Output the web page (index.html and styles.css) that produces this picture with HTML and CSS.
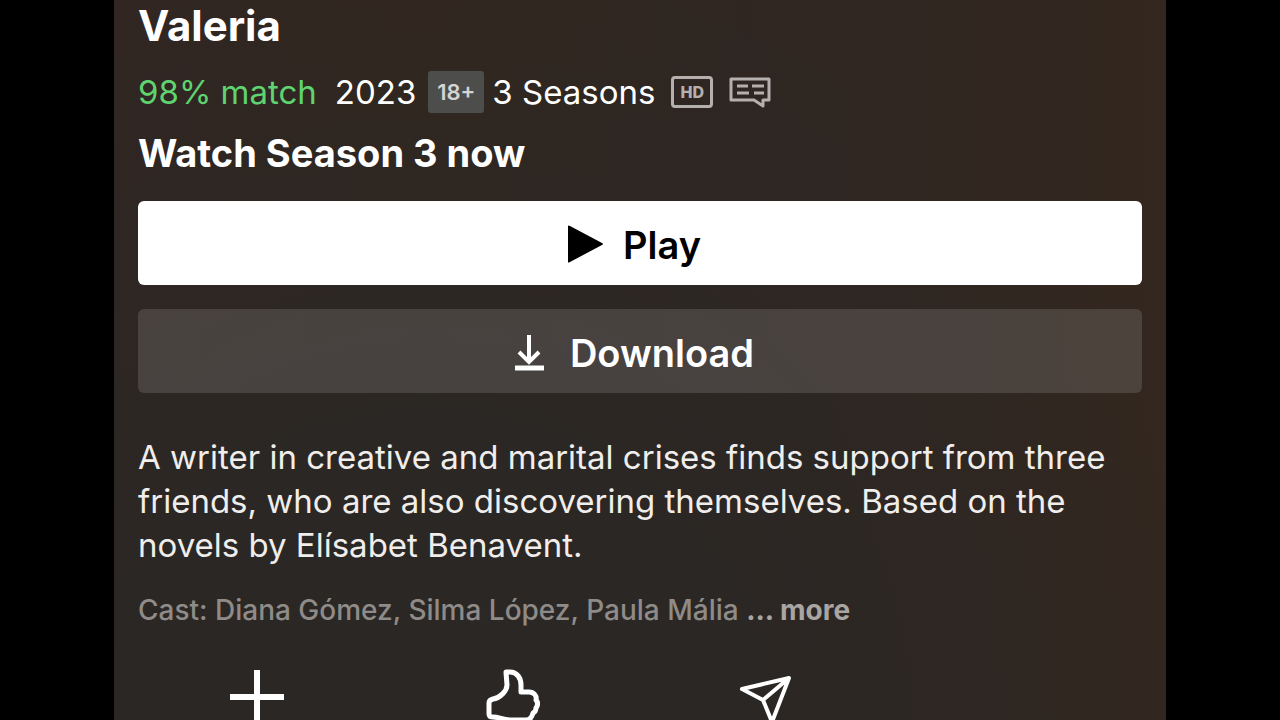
FILE: index.html
```html
<!DOCTYPE html>
<html lang="en">
  <head>
    <meta charset="UTF-8" />
    <meta name="viewport" content="width=device-width, initial-scale=1.0" />
    <title>Valeria</title>
    <link rel="stylesheet" href="styles.css">
  </head>
  <body>
    <main class="panel">
      <section class="details">
        <h1 class="details__title">Valeria</h1>

        <div class="meta">
          <span class="meta__match">98% match</span>
          <span class="meta__year">2023</span>
          <span class="meta__age">18+</span>
          <span class="meta__seasons">3 Seasons</span>
          <span class="meta__hd">HD</span>
          <svg class="meta__subs" viewBox="0 0 42 32" role="img" aria-label="Subtitles">
            <path d="M2 3H40V24H34V30L25 24H2Z" fill="none" stroke="currentColor" stroke-width="3" stroke-linejoin="round" />
            <path d="M8 10H19M23 10H35M8 17H20M25 17H35" fill="none" stroke="currentColor" stroke-width="3" />
          </svg>
        </div>

        <h2 class="details__subtitle">Watch Season 3 now</h2>

        <div class="details__btns">
          <button class="btn play">
            <svg class="play__icon" viewBox="0 0 36 40" aria-hidden="true">
              <path d="M1 1Q1 0 3 1L35 18Q37 19 35 20L3 37Q1 38 1 37Z" fill="currentColor" />
            </svg>
            Play
          </button>
          <button class="btn download">
            <svg class="download__icon" viewBox="0 0 30 38" aria-hidden="true">
              <path d="M15 1V27M5 18L15 28L25 18" fill="none" stroke="currentColor" stroke-width="4" />
              <path d="M1 34H30" stroke="currentColor" stroke-width="5" />
            </svg>
            Download
          </button>
        </div>

        <p class="details__text">A writer in creative and marital crises finds support from three friends, who are also discovering themselves. Based on the novels by Elísabet Benavent.</p>
        <p class="details__cast">Cast: Diana Gómez, Silma López, Paula Mália <a class="details__more" href="#">... more</a></p>
      </section>

      <nav class="actions">
        <button class="actions__item" aria-label="My List">
          <svg class="actions__icon" viewBox="0 0 56 56" aria-hidden="true">
            <path d="M28 1V55M1 28H55" stroke="currentColor" stroke-width="6" />
          </svg>
        </button>
        <button class="actions__item" aria-label="Rate">
          <svg class="actions__icon" viewBox="0 0 56 56" aria-hidden="true">
            <path d="M22 3H26C33 3 37 9 37 16V23H45C50 23 53 27 52 31C54 33 54 36 52 39C52 41 51 43 49 44C48 48 46 51 42 51H28C20 51 15 48 9 48Q5 48 5 45V34Q5 31 9 30C16 29 23 22 23 16Z" fill="none" stroke="currentColor" stroke-width="5" stroke-linejoin="round" />
          </svg>
        </button>
        <button class="actions__item" aria-label="Share">
          <svg class="actions__icon" viewBox="0 0 56 56" aria-hidden="true">
            <path d="M4 20L51 9L34 53L25 31ZM25 31L51 9" fill="none" stroke="currentColor" stroke-width="4" stroke-linejoin="round" />
          </svg>
        </button>
      </nav>
    </main>
  </body>
</html>
```

FILE: styles.css
```css
*{margin:0;padding:0;box-sizing:border-box;}
body{height:100vh;padding:0 114px;overflow:hidden;background-color:black;color:white;font-family:"Inter","Liberation Sans",sans-serif;}
.panel{min-height:100vh;background:radial-gradient(ellipse at 30% 100%,#2b2724 30%,transparent 75%),linear-gradient(90deg,#312622,#32271f 30%,#2f2622 60%,#33271f);}
.details{padding:4px 24px 0;}
.details__title{font-size:42px;line-height:44px;}
.meta{display:flex;align-items:center;margin-top:20px;height:48px;font-size:33px;}
.meta__match{color:#5ed36f;}
.meta__year{margin-left:18px;}
.meta__age{margin:0 8px 0 12px;width:56px;border-radius:3px;background-color:#4d4d4c;color:#d4d4d4;font-size:22px;font-weight:600;line-height:42px;text-align:center;}
.meta__hd{margin:0 16px;width:42px;border:3px solid #b5b0ad;border-radius:4px;color:#b5b0ad;font-size:16px;font-weight:800;line-height:26px;text-align:center;}
.meta__subs{width:42px;height:32px;color:#b5b0ad;}
.details__subtitle{margin-top:15px;font-size:38px;line-height:44px;}
.details__btns{display:flex;flex-direction:column;gap:24px;margin-top:26px;}
.btn{display:flex;justify-content:center;align-items:center;height:84px;padding:3px 12px 0 0;border:none;border-radius:6px;font-family:inherit;font-size:38px;font-weight:600;cursor:pointer;}
.play{gap:20px;background-color:white;color:black;}
.play__icon{width:36px;height:40px;}
.download{gap:26px;background-color:rgba(255,255,255,0.13);color:white;}
.download__icon{width:30px;height:38px;}
.details__text{margin-top:42px;color:#f0eeec;font-size:33px;line-height:44px;}
.details__cast{margin-top:24px;color:#8f8b88;font-size:28px;font-weight:500;line-height:38px;}
.details__more{color:#a9a5a2;font-weight:700;text-decoration:none;}
.actions{display:grid;grid-template-columns:repeat(4,1fr);margin-top:40px;padding:0 18px 0 16px;}
.actions__item{display:flex;justify-content:center;border:none;background:none;color:white;cursor:pointer;}
.actions__icon{width:56px;height:56px;}
```
